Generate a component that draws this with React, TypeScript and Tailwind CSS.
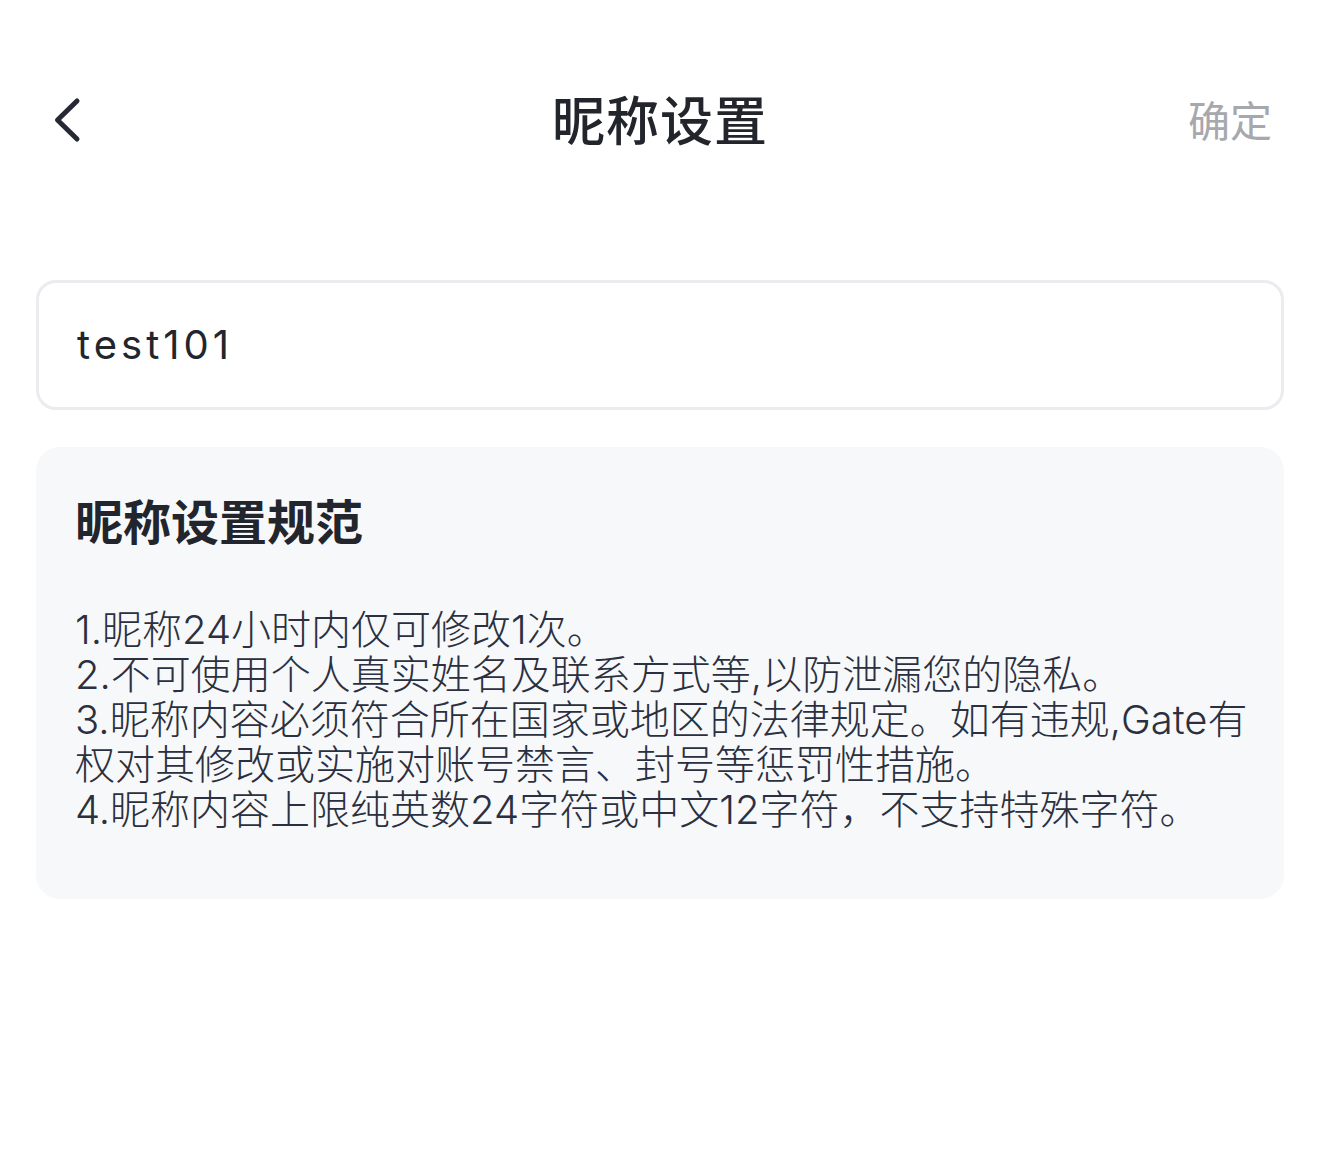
import React from "react";

export default function App() {
  const font = { fontFamily: '"Inter", "Noto Sans CJK SC", sans-serif' } as React.CSSProperties;
  return (
    <div className="w-[1320px] h-[1157px] bg-white flex flex-col" style={font}>
      <div className="h-[245px] grid grid-cols-[200px_1fr_200px] items-start pt-[90px] px-[36px]">
        <div className="h-[60px] flex items-center">
          <svg width="60" height="60" viewBox="0 0 60 60" className="ml-[12px]">
            <path d="M29 11 L9.5 30 L29 49" fill="none" stroke="#262933" strokeWidth="5" strokeLinecap="round" strokeLinejoin="round" />
          </svg>
        </div>
        <div className="flex justify-center">
          <span className="text-[53px] leading-[64px] font-medium text-[#23252d] tracking-[1px]">昵称设置</span>
        </div>
        <div className="flex justify-end pr-[12px] pt-[4px]">
          <span className="text-[42px] leading-[56px] text-[#a6a8ad]">确定</span>
        </div>
      </div>
      <div className="px-[36px] flex flex-col gap-[37px] pt-[35px]">
        <div className="h-[130px] border-[3px] border-[#ebebf0] rounded-[20px] flex items-center px-[38px]">
          <span className="text-[40px] text-[#23252d] tracking-[4px]">test101</span>
        </div>
        <div className="bg-[#f7f8fa] rounded-[24px] px-[39px] pt-[44px] h-[452px]">
          <div className="text-[48px] leading-[64px] font-bold text-[#23252d]">昵称设置规范</div>
          <div className="mt-[52px] text-[40px] leading-[45px] font-light text-[#2a3040] flex flex-col">
            <span className="whitespace-nowrap">1.昵称24小时内仅可修改1次。</span>
            <span className="whitespace-nowrap">2.不可使用个人真实姓名及联系方式等,以防泄漏您的隐私。</span>
            <span className="whitespace-nowrap">3.昵称内容必须符合所在国家或地区的法律规定。如有违规,Gate有</span>
            <span className="whitespace-nowrap">权对其修改或实施对账号禁言、封号等惩罚性措施。</span>
            <span className="whitespace-nowrap">4.昵称内容上限纯英数24字符或中文12字符，不支持特殊字符。</span>
          </div>
        </div>
      </div>
    </div>
  );
}
